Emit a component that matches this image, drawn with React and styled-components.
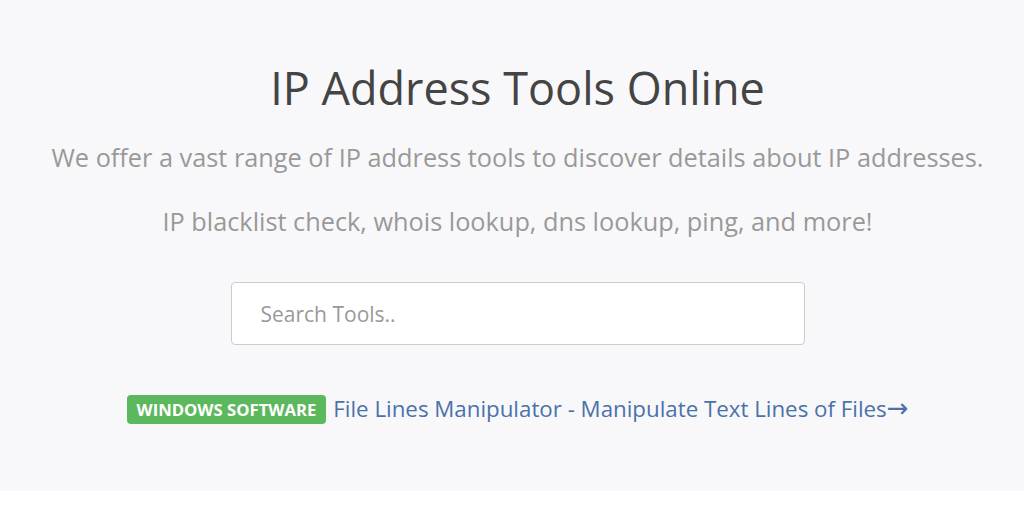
import React from "react";
import { styled, createGlobalStyle } from "styled-components";

const GlobalStyle = createGlobalStyle`
  html, body {
    margin: 0;
    padding: 0;
    background: #ffffff;
    font-family: "Open Sans", "Liberation Sans", sans-serif;
  }
`;

const Hero = styled.section`
  background: #f8f8fa;
  height: 491px;
  display: flex;
  flex-direction: column;
  align-items: center;
  padding-top: 58px;
  padding-left: 11px;
  box-sizing: border-box;
`;

const Title = styled.h1`
  margin: 0;
  font-size: 45px;
  font-weight: 400;
  color: #444;
  line-height: 60px;
`;

const Lead = styled.p`
  margin: ${({ $top }) => $top}px 0 0;
  font-size: 25.3px;
  font-weight: 400;
  color: #999;
  line-height: 34px;
`;

const SearchInput = styled.input`
  margin-top: 44px;
  width: 574px;
  height: 63px;
  box-sizing: border-box;
  border: 1px solid #ccc;
  border-radius: 4px;
  background: #fff;
  padding: 0 29px;
  font-family: inherit;
  font-size: 21px;
  color: #555;
  outline: none;

  &::placeholder {
    color: #999;
  }
`;

const Promo = styled.div`
  margin-top: 49px;
  display: flex;
  align-items: center;
  gap: 7px;
`;

const Badge = styled.span`
  background: #5cb85c;
  color: #fff;
  font-size: 16.7px;
  font-weight: 700;
  border-radius: 4px;
  padding: 3px 10px;
  line-height: 23px;
  text-transform: uppercase;
`;

const PromoLink = styled.a`
  color: #4a72a8;
  font-size: 22.3px;
  line-height: 30px;
  text-decoration: none;
`;

const Arrow = styled.span`
  font-family: "DejaVu Sans", sans-serif;
  font-size: 26px;
  line-height: 1;
`;

export default function App() {
  return (
    <>
      <GlobalStyle />
      <Hero>
        <Title>IP Address Tools Online</Title>
        <Lead $top={22}>
          We offer a vast range of IP address tools to discover details about IP addresses.
        </Lead>
        <Lead $top={30}>IP blacklist check, whois lookup, dns lookup, ping, and more!</Lead>
        <SearchInput type="text" placeholder="Search Tools.." />
        <Promo>
          <Badge>Windows Software</Badge>
          <PromoLink href="#">
            File Lines Manipulator - Manipulate Text Lines of Files<Arrow>→</Arrow>
          </PromoLink>
        </Promo>
      </Hero>
    </>
  );
}
